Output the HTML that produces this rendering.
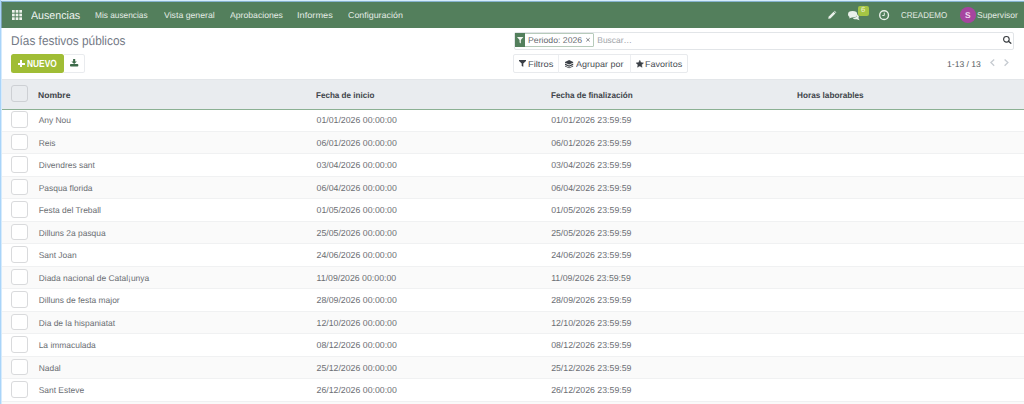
<!DOCTYPE html>
<html><head><meta charset="utf-8">
<style>
*{box-sizing:border-box;margin:0;padding:0}
html,body{width:1024px;height:404px;overflow:hidden;background:#fff;font-family:"Liberation Sans",sans-serif;position:relative}
.t{position:absolute;white-space:pre;line-height:1;transform-origin:0 0;text-rendering:geometricPrecision}
.b{position:absolute}
svg{position:absolute;overflow:visible}
.row{position:absolute;left:2px;width:1022px;height:23.5px;border-top:1px solid #f0f1f2;border-bottom:1px solid #f0f1f2;background:#fff}
.row.g{background:#fafafa}
.cb{position:absolute;left:11.2px;width:16.4px;height:16.4px;border:1px solid #d9dadc;border-radius:3px;background:#fff}
.rt{color:#6b6e73}
</style></head><body>
<!-- window border -->
<div class="b" style="left:0;top:0;width:1024px;height:1px;background:#d5ecfc"></div>
<div class="b" style="left:0;top:1px;width:1024px;height:1px;background:#86b3cf"></div>
<div class="b" style="left:0;top:0;width:1px;height:404px;background:#a9d4f9"></div>
<div class="b" style="left:1px;top:28px;width:1px;height:376px;background:#d6ebfc"></div>
<!-- navbar -->
<div class="b" style="left:1px;top:2px;width:1023px;height:25.7px;background:#537f5c"></div>
<div class="b" style="left:1px;top:1px;width:1px;height:27px;background:#7b9fb0"></div>
<svg style="left:12px;top:10px" width="10" height="10" viewBox="0 0 10 10">
  <g fill="#eef2ec">
    <rect x="0" y="0" width="2.7" height="2.7"/><rect x="3.65" y="0" width="2.7" height="2.7"/><rect x="7.3" y="0" width="2.7" height="2.7"/>
    <rect x="0" y="3.65" width="2.7" height="2.7"/><rect x="3.65" y="3.65" width="2.7" height="2.7"/><rect x="7.3" y="3.65" width="2.7" height="2.7"/>
    <rect x="0" y="7.3" width="2.7" height="2.7"/><rect x="3.65" y="7.3" width="2.7" height="2.7"/><rect x="7.3" y="7.3" width="2.7" height="2.7"/>
  </g>
</svg>
<!-- pencil -->
<svg style="left:827.8px;top:11px" width="8.2" height="8" viewBox="0 0 8.2 8">
  <path d="M0.2 7.8 L0.6 5.8 L5.6 0.8 L7.4 2.6 L2.4 7.6 Z" fill="#eaf0ea"/>
  <path d="M6.1 0.3 L6.6 -0.2 L8.4 1.6 L7.9 2.1 Z" fill="#eaf0ea"/>
</svg>
<!-- chat -->
<svg style="left:847.7px;top:10.8px" width="12" height="9.5" viewBox="0 0 12 9.5">
  <ellipse cx="4.6" cy="3.3" rx="4.6" ry="3.3" fill="#eaf0ea"/>
  <path d="M1.6 5.5 L1.2 7.6 L4.2 6.3 Z" fill="#eaf0ea"/>
  <path d="M9.2 3.6 C10.8 4.3 11.3 5.8 10.4 7 L11.6 9.3 L8.6 8.2 C7.2 8.6 5.6 8.2 4.9 7.3 C7.5 7.2 9.4 5.6 9.2 3.6 Z" fill="#eaf0ea"/>
</svg>
<div class="b" style="left:858px;top:5.8px;width:10.7px;height:10.5px;background:#a4c544;border-radius:2px"></div>
<div class="t" style="left:861.1px;top:5.5px;font-size:7.6px;color:#eef3dc">6</div>
<!-- clock -->
<svg style="left:878.6px;top:9.8px" width="10.2" height="10.3" viewBox="0 0 10.2 10.3">
  <circle cx="5.1" cy="5.15" r="4.4" fill="none" stroke="#eaf0ea" stroke-width="1.4"/>
  <path d="M5.3 2.6 V5.5 H3.3" fill="none" stroke="#eaf0ea" stroke-width="1"/>
</svg>
<!-- avatar -->
<div class="b" style="left:960px;top:7px;width:15.7px;height:15.7px;border-radius:50%;background:#a6459f"></div>
<div class="t" style="left:965.1px;top:11px;font-size:8.4px;font-weight:bold;color:#f1ddf0">S</div>

<!-- NUEVO button -->
<div class="b" style="left:11.4px;top:53.8px;width:52.4px;height:19.6px;background:#a0bd35;border-radius:2.5px"></div>
<div class="b" style="left:17.8px;top:62.7px;width:7.1px;height:1.9px;background:#fff"></div>
<div class="b" style="left:20.4px;top:60.2px;width:1.9px;height:6.9px;background:#fff"></div>
<!-- download button -->
<div class="b" style="left:63.8px;top:53.8px;width:21.2px;height:19.6px;border:1px solid #e9ebee;border-left:none;border-radius:0 2.5px 2.5px 0;background:#fff"></div>
<svg style="left:69.7px;top:58.8px" width="8.3" height="7.5" viewBox="0 0 8.3 7.5">
  <path d="M3.1 0 H5.2 V2.4 H6.9 L4.15 5.0 L1.4 2.4 H3.1 Z" fill="#3d6b4a"/>
  <rect x="0" y="5.1" width="8.3" height="2.4" rx="0.8" fill="#3d6b4a"/>
</svg>

<!-- search box -->
<div class="b" style="left:513.5px;top:32px;width:500.5px;height:18px;border:1px solid #e2e5e8;border-radius:2px;background:#fff"></div>
<div class="b" style="left:515px;top:33px;width:79.2px;height:14px;border:1px solid #b7cbbb;border-radius:1px;background:#fff"></div>
<div class="b" style="left:515px;top:33px;width:10px;height:14px;background:#537f5c"></div>
<svg style="left:516.8px;top:37px" width="6.4" height="6.4" viewBox="0 0 7 7"><path d="M0 0 H7 L4.2 3.3 V7 L2.8 6 V3.3 Z" fill="#f2f6f2"/></svg>
<svg style="left:586px;top:38.4px" width="4" height="3.6" viewBox="0 0 4 3.6"><path d="M0.3 0.2 L3.7 3.4 M3.7 0.2 L0.3 3.4" stroke="#73777c" stroke-width="0.9"/></svg>
<svg style="left:1003.4px;top:35.7px" width="8.4" height="7.4" viewBox="0 0 8.4 7.4"><circle cx="3.4" cy="3.3" r="2.8" fill="none" stroke="#35393d" stroke-width="1.1"/><path d="M5.4 5.3 L7.9 7.2" stroke="#35393d" stroke-width="1.4" stroke-linecap="round"/></svg>

<!-- filter group -->
<div class="b" style="left:513.2px;top:54.3px;width:174.7px;height:18.6px;border:1px solid #e8eaed;border-radius:2px;background:#fff"></div>
<div class="b" style="left:558.4px;top:54.5px;width:1px;height:18px;background:#eceef1"></div>
<div class="b" style="left:629.5px;top:54.5px;width:1px;height:18px;background:#eceef1"></div>
<svg style="left:519.1px;top:60.4px" width="7" height="6.8" viewBox="0 0 7 6.8"><path d="M0 0 H7 V0.9 L4.3 3.6 V6.8 L2.7 6.1 V3.6 L0 0.9 Z" fill="#3a3f45"/></svg>
<svg style="left:565.4px;top:59.6px" width="8.2" height="8.2" viewBox="0 0 8.2 8.2"><path d="M4.1 0 L8.2 1.9 V2.7 L4.1 4.6 L0 2.7 V1.9 Z" fill="#3a3f45"/><path d="M0 3.6 L4.1 5.5 L8.2 3.6 V4.9 L4.1 6.8 L0 4.9 Z" fill="#3a3f45"/><path d="M0 5.8 L4.1 7.6 L8.2 5.8 V6.6 L4.1 8.2 L0 6.6 Z" fill="#3a3f45"/></svg>
<svg style="left:635.6px;top:59.7px" width="7.6" height="7.6" viewBox="0 0 10 10"><path d="M5.00 0.20 L6.50 3.34 L9.95 3.79 L7.43 6.19 L8.06 9.61 L5.00 7.95 L1.94 9.61 L2.57 6.19 L0.05 3.79 L3.50 3.34 Z" fill="#3a3f45" stroke="#3a3f45" stroke-width="0.5" stroke-linejoin="round"/></svg>
<!-- pager arrows -->
<svg style="left:989.8px;top:59.4px" width="4.8" height="7.2" viewBox="0 0 4.8 7.2"><path d="M4.2 0.5 L0.9 3.6 L4.2 6.7" fill="none" stroke="#c6cbd1" stroke-width="1.3"/></svg>
<svg style="left:1003.8px;top:59.4px" width="4.8" height="7.2" viewBox="0 0 4.8 7.2"><path d="M0.6 0.5 L3.9 3.6 L0.6 6.7" fill="none" stroke="#c6cbd1" stroke-width="1.3"/></svg>

<!-- table header -->
<div class="row" style="top:108.30px"></div>
<div class="row g" style="top:130.80px"></div>
<div class="row" style="top:153.30px"></div>
<div class="row g" style="top:175.80px"></div>
<div class="row" style="top:198.30px"></div>
<div class="row g" style="top:220.80px"></div>
<div class="row" style="top:243.30px"></div>
<div class="row g" style="top:265.80px"></div>
<div class="row" style="top:288.30px"></div>
<div class="row g" style="top:310.80px"></div>
<div class="row" style="top:333.30px"></div>
<div class="row g" style="top:355.80px"></div>
<div class="row" style="top:378.30px"></div>
<div class="row g" style="top:400.80px"></div>
<div class="cb" style="top:111.20px"></div>
<div class="t rt" style="left:38.70px;top:116px;font-size:8.44px">Any Nou</div>
<div class="t rt" style="left:316.55px;top:116px;font-size:8.76px">01/01/2026 00:00:00</div>
<div class="t rt" style="left:551.15px;top:116px;font-size:8.76px">01/01/2026 23:59:59</div>
<div class="cb" style="top:133.70px"></div>
<div class="t rt" style="left:38.70px;top:139px;font-size:8.44px">Reis</div>
<div class="t rt" style="left:316.55px;top:139px;font-size:8.76px">06/01/2026 00:00:00</div>
<div class="t rt" style="left:551.15px;top:139px;font-size:8.76px">06/01/2026 23:59:59</div>
<div class="cb" style="top:156.20px"></div>
<div class="t rt" style="left:38.70px;top:161px;font-size:8.44px">Divendres sant</div>
<div class="t rt" style="left:316.55px;top:161px;font-size:8.76px">03/04/2026 00:00:00</div>
<div class="t rt" style="left:551.15px;top:161px;font-size:8.76px">03/04/2026 23:59:59</div>
<div class="cb" style="top:178.70px"></div>
<div class="t rt" style="left:38.70px;top:184px;font-size:8.44px">Pasqua florida</div>
<div class="t rt" style="left:316.55px;top:184px;font-size:8.76px">06/04/2026 00:00:00</div>
<div class="t rt" style="left:551.15px;top:184px;font-size:8.76px">06/04/2026 23:59:59</div>
<div class="cb" style="top:201.20px"></div>
<div class="t rt" style="left:38.70px;top:206px;font-size:8.44px">Festa del Treball</div>
<div class="t rt" style="left:316.55px;top:206px;font-size:8.76px">01/05/2026 00:00:00</div>
<div class="t rt" style="left:551.15px;top:206px;font-size:8.76px">01/05/2026 23:59:59</div>
<div class="cb" style="top:223.70px"></div>
<div class="t rt" style="left:38.70px;top:229px;font-size:8.44px">Dilluns 2a pasqua</div>
<div class="t rt" style="left:316.55px;top:229px;font-size:8.76px">25/05/2026 00:00:00</div>
<div class="t rt" style="left:551.15px;top:229px;font-size:8.76px">25/05/2026 23:59:59</div>
<div class="cb" style="top:246.20px"></div>
<div class="t rt" style="left:38.70px;top:251px;font-size:8.44px">Sant Joan</div>
<div class="t rt" style="left:316.55px;top:251px;font-size:8.76px">24/06/2026 00:00:00</div>
<div class="t rt" style="left:551.15px;top:251px;font-size:8.76px">24/06/2026 23:59:59</div>
<div class="cb" style="top:268.70px"></div>
<div class="t rt" style="left:38.70px;top:274px;font-size:8.44px">Diada nacional de Catal¡unya</div>
<div class="t rt" style="left:316.55px;top:274px;font-size:8.76px">11/09/2026 00:00:00</div>
<div class="t rt" style="left:551.15px;top:274px;font-size:8.76px">11/09/2026 23:59:59</div>
<div class="cb" style="top:291.20px"></div>
<div class="t rt" style="left:38.70px;top:296px;font-size:8.44px">Dilluns de festa major</div>
<div class="t rt" style="left:316.55px;top:296px;font-size:8.76px">28/09/2026 00:00:00</div>
<div class="t rt" style="left:551.15px;top:296px;font-size:8.76px">28/09/2026 23:59:59</div>
<div class="cb" style="top:313.70px"></div>
<div class="t rt" style="left:38.70px;top:319px;font-size:8.44px">Dia de la hispaniatat</div>
<div class="t rt" style="left:316.55px;top:319px;font-size:8.76px">12/10/2026 00:00:00</div>
<div class="t rt" style="left:551.15px;top:319px;font-size:8.76px">12/10/2026 23:59:59</div>
<div class="cb" style="top:336.20px"></div>
<div class="t rt" style="left:38.70px;top:341px;font-size:8.44px">La immaculada</div>
<div class="t rt" style="left:316.55px;top:341px;font-size:8.76px">08/12/2026 00:00:00</div>
<div class="t rt" style="left:551.15px;top:341px;font-size:8.76px">08/12/2026 23:59:59</div>
<div class="cb" style="top:358.70px"></div>
<div class="t rt" style="left:38.70px;top:364px;font-size:8.44px">Nadal</div>
<div class="t rt" style="left:316.55px;top:364px;font-size:8.76px">25/12/2026 00:00:00</div>
<div class="t rt" style="left:551.15px;top:364px;font-size:8.76px">25/12/2026 23:59:59</div>
<div class="cb" style="top:381.20px"></div>
<div class="t rt" style="left:38.70px;top:386px;font-size:8.44px">Sant Esteve</div>
<div class="t rt" style="left:316.55px;top:386px;font-size:8.76px">26/12/2026 00:00:00</div>
<div class="t rt" style="left:551.15px;top:386px;font-size:8.76px">26/12/2026 23:59:59</div>
<div class="b" style="left:2px;top:79px;width:1022px;height:30px;background:#e9ecef"></div>
<div class="b" style="left:2px;top:78.5px;width:1022px;height:1px;background:#e3e6e9"></div>
<div class="b" style="left:2px;top:108.8px;width:1022px;height:1.2px;background:#8bb093"></div>
<div class="cb" style="top:85.2px;background:#e9ecef;border-color:#cdd0d4"></div>
<div class="t" style="left:31.00px;top:11px;font-size:11.01px;font-weight:normal;color:#eef3ef;transform:scaleX(0.968);">Ausencias</div>
<div class="t" style="left:95.34px;top:11px;font-size:8.48px;font-weight:normal;color:#e4ece5;transform:scaleX(0.980);">Mis ausencias</div>
<div class="t" style="left:163.66px;top:11px;font-size:8.48px;font-weight:normal;color:#e4ece5;transform:scaleX(1.030);">Vista general</div>
<div class="t" style="left:229.80px;top:11px;font-size:8.48px;font-weight:normal;color:#e4ece5;transform:scaleX(1.022);">Aprobaciones</div>
<div class="t" style="left:297.27px;top:11px;font-size:8.48px;font-weight:normal;color:#e4ece5;transform:scaleX(1.085);">Informes</div>
<div class="t" style="left:347.86px;top:11px;font-size:8.48px;font-weight:normal;color:#e4ece5;transform:scaleX(1.049);">Configuración</div>
<div class="t" style="left:900.90px;top:11px;font-size:8.55px;font-weight:normal;color:#e4ece5;transform:scaleX(0.933);">CREADEMO</div>
<div class="t" style="left:977.07px;top:11px;font-size:8.55px;font-weight:normal;color:#e4ece5;">Supervisor</div>
<div class="t" style="left:11.05px;top:35px;font-size:12.83px;font-weight:normal;color:#737985;transform:scaleX(0.922);">Días festivos públicos</div>
<div class="t" style="left:27.01px;top:60px;font-size:10.36px;font-weight:bold;color:#ffffff;transform:scaleX(0.808);">NUEVO</div>
<div class="t" style="left:528.10px;top:36px;font-size:8.41px;font-weight:normal;color:#666a70;transform:scaleX(1.035);">Periodo: 2026</div>
<div class="t" style="left:597.33px;top:36px;font-size:8.41px;font-weight:normal;color:#9ea3a8;">Buscar…</div>
<div class="t" style="left:528.06px;top:60px;font-size:8.55px;font-weight:normal;color:#474c53;transform:scaleX(1.089);">Filtros</div>
<div class="t" style="left:575.90px;top:60px;font-size:8.55px;font-weight:normal;color:#474c53;transform:scaleX(1.050);">Agrupar por</div>
<div class="t" style="left:644.88px;top:60px;font-size:8.55px;font-weight:normal;color:#474c53;transform:scaleX(1.058);">Favoritos</div>
<div class="t" style="left:946.71px;top:60px;font-size:8.41px;font-weight:normal;color:#555a60;transform:scaleX(1.021);">1-13 / 13</div>
<div class="t" style="left:38.10px;top:91px;font-size:8.41px;font-weight:bold;color:#40444a;transform:scaleX(1.021);">Nombre</div>
<div class="t" style="left:316.33px;top:91px;font-size:8.41px;font-weight:bold;color:#40444a;transform:scaleX(0.962);">Fecha de inicio</div>
<div class="t" style="left:550.93px;top:91px;font-size:8.41px;font-weight:bold;color:#40444a;transform:scaleX(0.965);">Fecha de finalización</div>
<div class="t" style="left:797.43px;top:91px;font-size:8.41px;font-weight:bold;color:#40444a;transform:scaleX(0.977);">Horas laborables</div>
</body></html>
